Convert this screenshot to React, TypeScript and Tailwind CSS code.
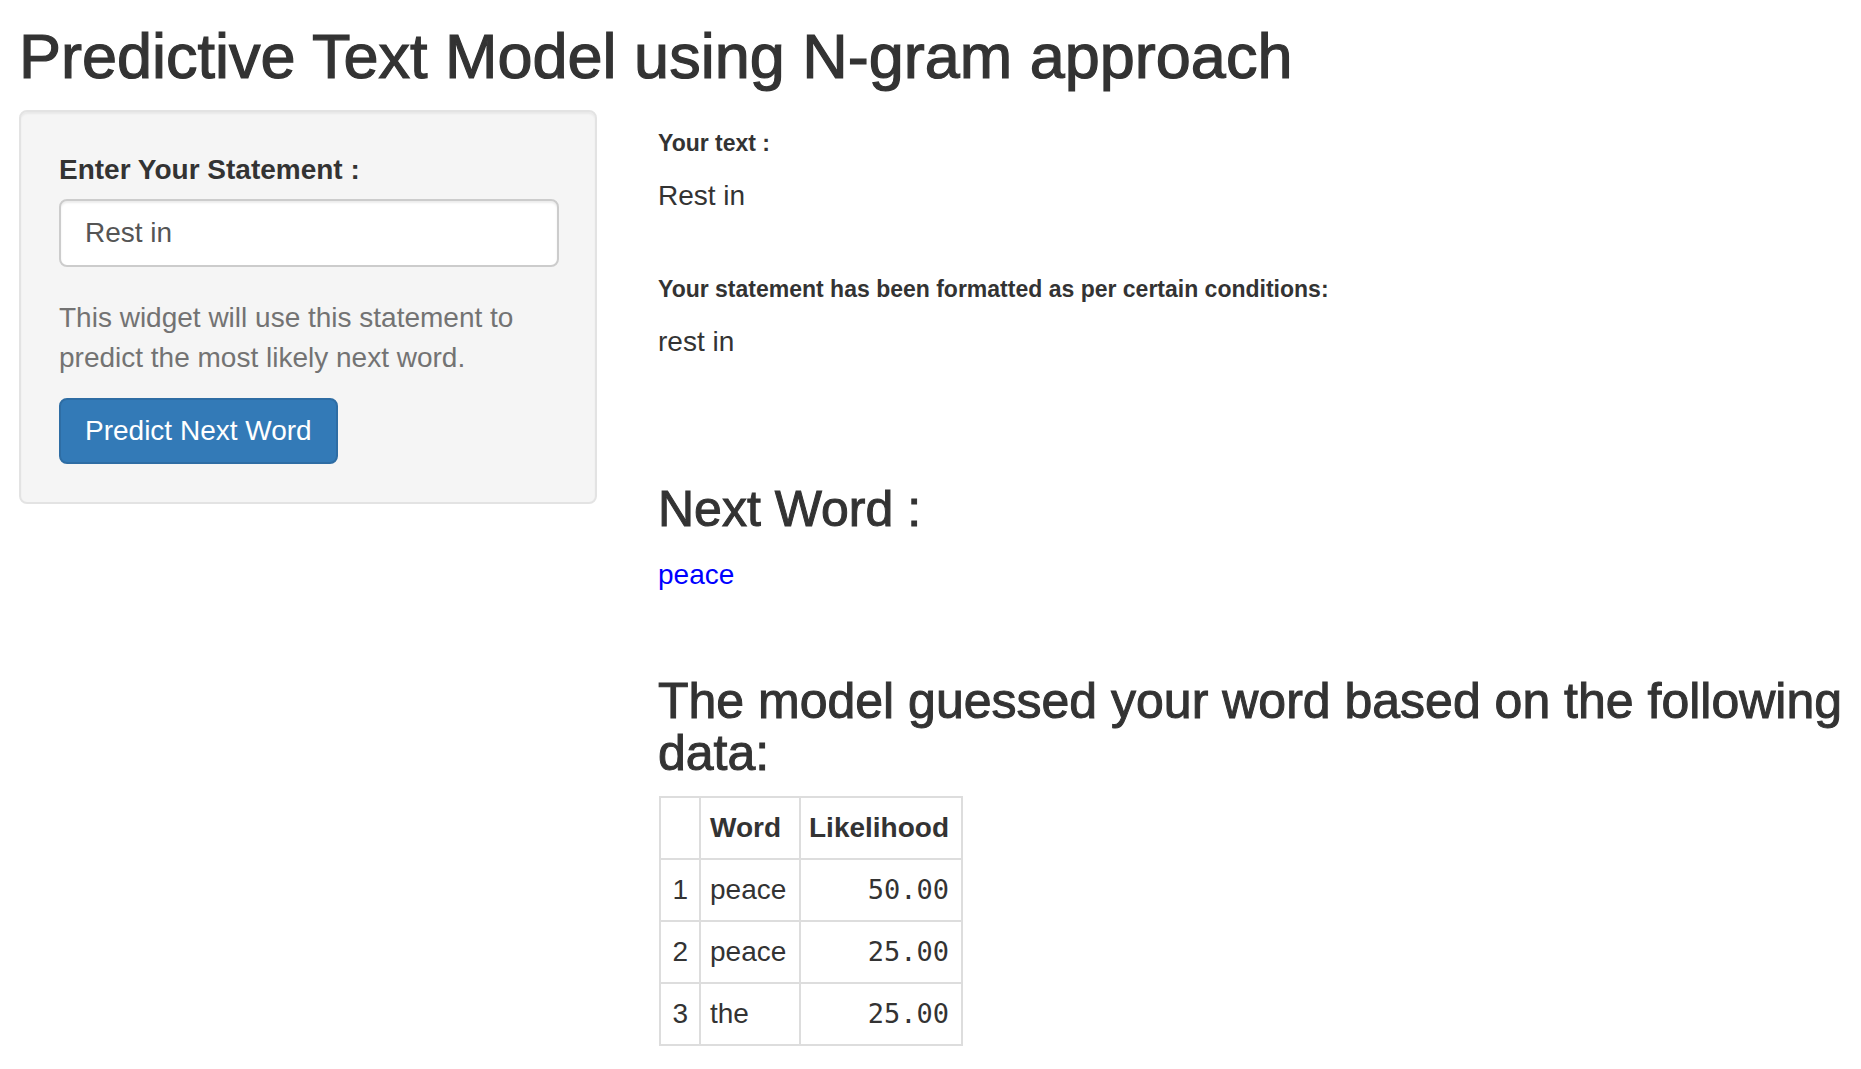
import React from "react";

const rows = [
  { i: "1", w: "peace", l: "50.00" },
  { i: "2", w: "peace", l: "25.00" },
  { i: "3", w: "the", l: "25.00" },
];

export default function App() {
  return (
    <div className="min-h-screen bg-white text-[#333] font-['Liberation_Sans',Arial,sans-serif] text-[28px] leading-[40px] pl-[19px]">
      <h1 className="pt-[22px] text-[63px] leading-[69px] font-medium m-0 whitespace-nowrap [-webkit-text-stroke:1.2px_#333]">
        Predictive Text Model using N-gram approach
      </h1>
      <div className="flex mt-[19px]">
        <div className="w-[578px] shrink-0 self-start bg-[#f5f5f5] border-2 border-[#e3e3e3] rounded-[8px] p-[38px] shadow-[inset_0_2px_2px_rgba(0,0,0,0.05)]">
          <label className="block font-bold text-[28px] leading-[40px] mb-[9px]">Enter Your Statement :</label>
          <div className="w-[500px] h-[68px] bg-white border-2 border-[#ccc] rounded-[8px] px-[24px] flex items-center text-[#555] shadow-[inset_0_2px_2px_rgba(0,0,0,0.075)]">
            Rest in
          </div>
          <p className="mt-[31px] mb-[20px] text-[#737373]">
            This widget will use this statement to predict the most likely next word.
          </p>
          <button className="h-[66px] px-[24px] bg-[#337ab7] border-2 border-[#2e6da4] rounded-[8px] text-white text-[28px] leading-[40px] font-['Liberation_Sans',Arial,sans-serif]">
            Predict Next Word
          </button>
        </div>
        <div className="ml-[61px] flex-1 pr-[3px]">
          <h6 className="mt-[20px] text-[23px] leading-[26px] font-bold">Your text :</h6>
          <div className="mt-[20px]">Rest in</div>
          <h6 className="mt-[60px] text-[23px] leading-[26px] font-bold">
            Your statement has been formatted as per certain conditions:
          </h6>
          <div className="mt-[20px]">rest in</div>
          <h3 className="mt-[121px] text-[50px] leading-[52px] font-medium [-webkit-text-stroke:1px_#333]">Next Word :</h3>
          <div className="mt-[20px] text-[#0000ff]">peace</div>
          <h3 className="mt-[80px] text-[50px] leading-[52px] font-medium [-webkit-text-stroke:1px_#333]">
            The model guessed your word based on the following data:
          </h3>
          <table className="mt-[17px] ml-[1px] border-collapse table-fixed w-[302px]">
            <thead>
              <tr className="h-[62px]">
                <th className="w-[40px] border-2 border-[#ddd]"></th>
                <th className="w-[100px] border-2 border-[#ddd] text-left pl-[9px] font-bold">Word</th>
                <th className="w-[162px] border-2 border-[#ddd] text-right pr-[12px] font-bold">Likelihood</th>
              </tr>
            </thead>
            <tbody>
              {rows.map((r) => (
                <tr key={r.i} className="h-[62px]">
                  <td className="border-2 border-[#ddd] text-right pr-[11px]">{r.i}</td>
                  <td className="border-2 border-[#ddd] text-left pl-[9px]">{r.w}</td>
                  <td className="border-2 border-[#ddd] text-right pr-[12px] font-['DejaVu_Sans_Mono',monospace] text-[27px]">
                    {r.l}
                  </td>
                </tr>
              ))}
            </tbody>
          </table>
        </div>
      </div>
    </div>
  );
}
